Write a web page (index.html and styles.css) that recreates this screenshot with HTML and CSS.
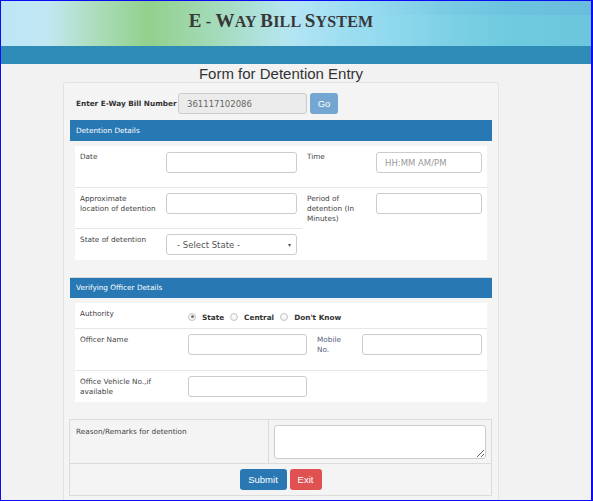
FILE: index.html
```html
<!DOCTYPE html>
<html lang="en">
<head>
<meta charset="utf-8">
<title>E-Way Bill System - Detention Entry</title>
<link rel="stylesheet" href="styles.css">
</head>
<body>
<div class="frame">
  <header class="banner">
    <div class="wrap">
      <h1 class="brand"><span class="big">E</span> - <span class="big">W</span>AY <span class="big">B</span>ILL <span class="big">S</span>YSTEM</h1>
    </div>
  </header>
  <div class="navbar"></div>
  <div class="wrap">
    <h2 class="page-title">Form for Detention Entry</h2>
    <div class="card">
      <div class="bill-row">
        <label class="bill-label">Enter E-Way Bill Number</label>
        <input class="bill-input" type="text" value="361117102086" readonly>
        <button class="btn btn-go" type="button">Go</button>
      </div>

      <div class="section-head">Detention Details</div>
      <div class="section-body">
        <div class="panel grid-det">
          <div class="cell lbl bb">Date</div>
          <div class="cell fld bb"><input class="ctl" type="text"></div>
          <div class="cell lbl bb">Time</div>
          <div class="cell fld bb"><input class="ctl" type="text" placeholder="HH:MM AM/PM"></div>

          <div class="cell lbl bb">Approximate location of detention</div>
          <div class="cell fld bb"><input class="ctl" type="text"></div>
          <div class="cell lbl span2">Period of detention (In Minutes)</div>
          <div class="cell fld span2"><input class="ctl" type="text"></div>

          <div class="cell lbl">State of detention</div>
          <div class="cell fld">
            <div class="select ctl"><span>- Select State -</span><span class="caret">&#9662;</span></div>
          </div>
        </div>
      </div>

      <div class="section-head sep">Verifying Officer Details</div>
      <div class="section-body">
        <div class="panel grid-off">
          <div class="cell lbl bb">Authority</div>
          <div class="cell radios bb">
            <span class="radio checked"></span><span class="rtxt">State</span>
            <span class="radio"></span><span class="rtxt">Central</span>
            <span class="radio"></span><span class="rtxt">Don't Know</span>
          </div>

          <div class="cell lbl bb">Officer Name</div>
          <div class="cell fld bb"><input class="ctl" type="text"></div>
          <div class="cell lbl bb mob">Mobile No.</div>
          <div class="cell fld bb"><input class="ctl" type="text"></div>

          <div class="cell lbl">Office Vehicle No.,if available</div>
          <div class="cell fld"><input class="ctl" type="text"></div>
          <div class="cell"></div>
          <div class="cell"></div>
        </div>
      </div>

      <div class="remarks">
        <div class="remarks-row">
          <div class="remarks-label">Reason/Remarks for detention</div>
          <div class="remarks-field"><textarea class="ctl area"></textarea></div>
        </div>
        <div class="actions">
          <button class="btn btn-primary" type="button">Submit</button>
          <button class="btn btn-danger" type="button">Exit</button>
        </div>
      </div>
    </div>
  </div>
</div>
</body>
</html>
```
FILE: styles.css
```css
* { box-sizing: border-box; }

html, body {
  margin: 0;
  padding: 0;
}

body {
  font-family: "DejaVu Sans", Verdana, sans-serif;
  color: #333;
}

.frame {
  width: 593px;
  height: 501px;
  overflow: hidden;
  border: 1px solid #0b0bf5;
  border-right-width: 2px;
  background: #f2f2f2;
}

.wrap {
  width: 436px;
  margin-left: 62px;
}

/* ---------- banner ---------- */
.banner {
  height: 45px;
  background:
    linear-gradient(100deg, rgba(255,255,255,0) 0%, rgba(255,255,255,0) 38%, rgba(255,255,255,0.18) 48%, rgba(255,255,255,0) 60%),
    linear-gradient(90deg, #bce6f6 0%, #c2e7f2 8%, #a9dcb6 17%, #92d08c 25%, #a6dcc0 38%, #a4e0f2 50%, #98dcf0 62%, #7fd1e6 75%, #6ecbdf 86%, #6cc6de 100%);
  position: relative;
}

.banner::after {
  content: "";
  position: absolute;
  left: 0;
  right: 0;
  top: 0;
  height: 14px;
  background: linear-gradient(90deg, rgba(255,255,255,0) 60%, rgba(100,170,220,0.35) 100%);
}

.brand {
  margin: 0;
  padding-top: 10px;
  text-align: center;
  font-family: "Liberation Serif", "Times New Roman", serif;
  font-weight: bold;
  font-size: 16px;
  line-height: 20px;
  color: #383838;
  letter-spacing: 0.2px;
  position: relative;
  z-index: 1;
}

.brand .big {
  font-size: 19px;
}

.navbar {
  height: 18px;
  background: #2e8cb7;
}

/* ---------- title ---------- */
.page-title {
  margin: 0;
  height: 18px;
  text-align: center;
  font-family: "Liberation Sans", Arial, sans-serif;
  font-weight: normal;
  font-size: 15px;
  line-height: 19px;
  color: #333;
}

/* ---------- card ---------- */
.card {
  border: 1px solid #e2e2e2;
  border-radius: 3px;
  background: #f4f4f4;
  padding: 0 6px;
  height: 460px;
}

.bill-row {
  display: flex;
  align-items: flex-start;
  padding: 10px 0 0 6px;
  height: 37px;
}

.bill-label {
  width: 102px;
  font-size: 7.3px;
  font-weight: bold;
  line-height: 21px;
  color: #333;
  white-space: nowrap;
}

.bill-input {
  width: 129px;
  height: 21px;
  border: 1px solid #ccc;
  border-radius: 3px;
  background: #ebebeb;
  font-family: "DejaVu Sans", Verdana, sans-serif;
  font-size: 8.5px;
  color: #666;
  padding: 0 8px;
  margin: 0;
}

.btn {
  border: 0;
  border-radius: 3px;
  color: #fff;
  font-family: "Liberation Sans", Arial, sans-serif;
  font-size: 9.5px;
  height: 21px;
  padding: 0;
  margin: 0;
}

.btn-go {
  width: 28px;
  margin-left: 3px;
  background: #73a6d0;
}

.btn-primary {
  width: 47px;
  background: #2a78b3;
}

.btn-danger {
  width: 32px;
  background: #e05252;
}

/* ---------- sections ---------- */
.section-head {
  height: 21px;
  background: #2878b4;
  color: #fff;
  font-size: 7.3px;
  line-height: 21px;
  padding-left: 6px;
}

.section-head.sep {
  height: 21px;
  border-top: 1px solid #d8d8d8;
  line-height: 20px;
}

.section-body {
  padding: 5px 5px 17px;
}

.panel {
  background: #fff;
  display: grid;
}

.grid-det {
  grid-template-columns: 91px 136px 74px 111px;
  grid-template-rows: 42px 41px 31px;
}

.grid-off {
  grid-template-columns: 113px 124px 50px 125px;
  grid-template-rows: 26px 42px 31px;
}

.cell {
  font-size: 7.3px;
  line-height: 10px;
  color: #444;
}

.lbl {
  padding: 6px 10px 0 5px;
}

.fld {
  padding: 5px 5px 0 0;
}

.grid-det .cell:nth-child(-n+4) {
  padding-top: 6px;
}

.bb {
  border-bottom: 1px solid #e6e6e6;
}

.span2 {
  grid-row: span 2;
}

.mob {
  color: #55607a;
}

.ctl {
  display: block;
  width: 100%;
  height: 21px;
  margin: 0;
  border: 1px solid #ccc;
  border-radius: 3px;
  background: #fff;
  font-family: "DejaVu Sans", Verdana, sans-serif;
  font-size: 8.5px;
  color: #555;
  padding: 0 8px;
}

.ctl::placeholder {
  color: #9a9a9a;
}

.select {
  display: flex;
  align-items: center;
  justify-content: space-between;
  padding: 0 5px 0 10px;
}

.caret {
  font-size: 6px;
  color: #555;
}

/* radios */
.radios {
  grid-column: span 3;
  display: flex;
  align-items: center;
  padding: 2px 0 0 0;
  font-weight: bold;
  color: #333;
}

.radio {
  width: 8px;
  height: 8px;
  border-radius: 50%;
  border: 1px solid #c4c4c4;
  background: radial-gradient(circle at 50% 40%, #ffffff 0%, #ececec 100%);
  margin-left: 6px;
  margin-right: 6px;
  position: relative;
}

.radio:first-child {
  margin-left: 0;
}

.radio.checked::after {
  content: "";
  position: absolute;
  left: 1.5px;
  top: 1.5px;
  width: 3px;
  height: 3px;
  border-radius: 50%;
  background: #777;
}

.rtxt {
  font-size: 7.3px;
  padding-top: 3px;
}

/* ---------- remarks ---------- */
.remarks {
  margin-left: -1px;
  border: 1px solid #dcdcdc;
}

.remarks-row {
  display: flex;
  height: 44px;
  border-bottom: 1px solid #dcdcdc;
}

.remarks-label {
  width: 199px;
  border-right: 1px solid #dcdcdc;
  font-size: 7.3px;
  line-height: 10px;
  color: #444;
  padding: 7px 6px;
}

.remarks-field {
  flex: 1;
  padding: 5px 5px;
}

.area {
  height: 34px;
  resize: vertical;
}

.actions {
  display: flex;
  justify-content: center;
  gap: 3px;
  padding: 5px 0 5px;
}
```
